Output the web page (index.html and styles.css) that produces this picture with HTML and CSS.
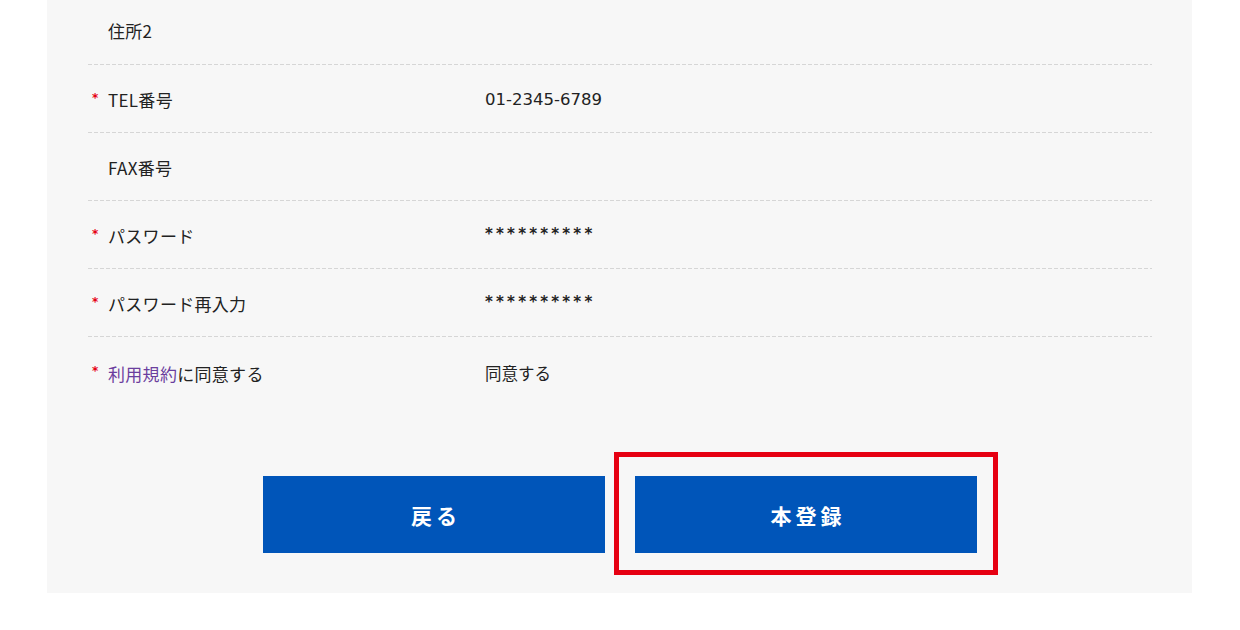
FILE: index.html
```html
<!DOCTYPE html>
<html lang="ja">
<head>
<meta charset="utf-8">
<link rel="stylesheet" href="styles.css">
</head>
<body>
<div class="panel">
  <div class="rows">
    <div class="row first">
      <div class="label"><span class="req"></span>住所2</div>
      <div class="value"></div>
    </div>
    <div class="row">
      <div class="label"><span class="req">*</span>TEL番号</div>
      <div class="value">01-2345-6789</div>
    </div>
    <div class="row">
      <div class="label"><span class="req"></span>FAX番号</div>
      <div class="value"></div>
    </div>
    <div class="row">
      <div class="label"><span class="req">*</span>パスワード</div>
      <div class="value mask">**********</div>
    </div>
    <div class="row">
      <div class="label"><span class="req">*</span>パスワード再入力</div>
      <div class="value mask">**********</div>
    </div>
    <div class="row last">
      <div class="label"><span class="req">*</span><span class="link">利用規約</span>に同意する</div>
      <div class="value">同意する</div>
    </div>
  </div>
  <div class="buttons">
    <button class="btn">戻る</button>
    <div class="highlight-wrap">
      <button class="btn">本登録</button>
      <span class="highlight"></span>
    </div>
  </div>
</div>
</body>
</html>
```
FILE: styles.css
```css
html, body {
  margin: 0;
  padding: 0;
  background: #ffffff;
}
body {
  font-family: "DejaVu Sans", "Noto Sans CJK JP", sans-serif;
  color: #222222;
}
.panel {
  display: flow-root;
  margin-left: 47px;
  width: 1145px;
  height: 593px;
  background: #f7f7f7;
  box-sizing: border-box;
  padding: 0 40px 0 41px;
}
.rows {
  margin-top: -2px;
}
.row {
  display: flex;
  align-items: center;
  height: 67px;
  border-bottom: 1px solid transparent;
  background-image: repeating-linear-gradient(to right, #d6d6d6 0, #d6d6d6 4px, transparent 4px, transparent 6px);
  background-size: 100% 1px;
  background-position: bottom left;
  background-repeat: no-repeat;
}
.row.first {
  padding-bottom: 3px;
  box-sizing: border-box;
  height: 68px;
}
.row.last {
  background-image: none;
  height: 70px;
}
.label {
  width: 397px;
  display: flex;
  align-items: center;
  font-family: "Noto Sans CJK JP", sans-serif;
  font-size: 17px;
  font-weight: 400;
  letter-spacing: 0.3px;
}
.label .req {
  width: 20px;
  box-sizing: border-box;
  padding-left: 4px;
  color: #e60012;
  font-family: "DejaVu Sans", sans-serif;
  font-size: 12px;
  font-weight: bold;
  position: relative;
  top: -2px;
}
.label .link {
  color: #6b3e9e;
}
.value {
  flex: 1;
  font-family: "DejaVu Sans", "Noto Sans CJK JP", sans-serif;
  font-size: 16.5px;
}
.value.mask {
  font-size: 15px;
  font-weight: bold;
  letter-spacing: 3.2px;
  position: relative;
  top: -2px;
}
.buttons {
  display: flex;
  justify-content: center;
  gap: 30px;
  margin-top: 67px;
}
.btn {
  width: 342px;
  height: 77px;
  border: none;
  background: #0055b9;
  color: #ffffff;
  font-family: "Noto Sans CJK JP", sans-serif;
  font-weight: bold;
  font-size: 21px;
  letter-spacing: 4px;
  padding: 0 0 0 4px;
  margin: 0;
  display: block;
}
.highlight-wrap {
  position: relative;
}
.highlight {
  position: absolute;
  left: -21px;
  right: -21px;
  top: -24px;
  bottom: -22px;
  border: 5px solid #e60012;
  pointer-events: none;
}
```
